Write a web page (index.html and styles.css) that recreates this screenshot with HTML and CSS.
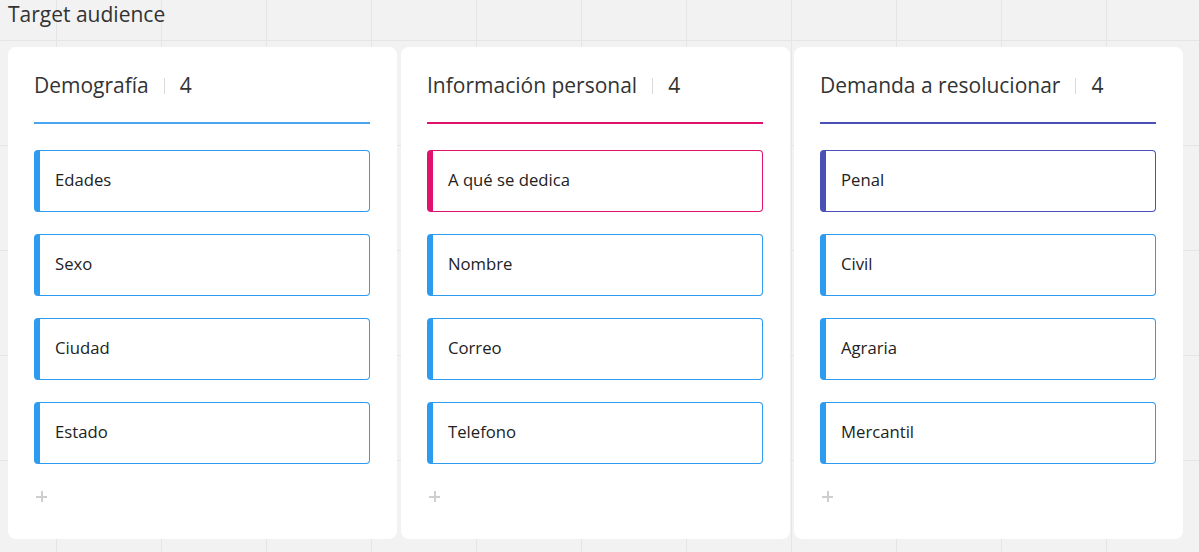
FILE: index.html
```html
<!DOCTYPE html>
<html lang="es">
<head>
<meta charset="utf-8">
<title>Target audience</title>
<link rel="stylesheet" href="styles.css">
</head>
<body>
<div class="page-title">Target audience</div>
<div class="boards">
  <section class="board blue">
    <header class="board-head"><span class="board-title">Demografía</span><span class="sep"></span><span class="count">4</span></header>
    <div class="rule"></div>
    <ul class="items">
      <li class="item">Edades</li>
      <li class="item">Sexo</li>
      <li class="item">Ciudad</li>
      <li class="item">Estado</li>
    </ul>
    <div class="add"></div>
  </section>
  <section class="board pink">
    <header class="board-head"><span class="board-title">Información personal</span><span class="sep"></span><span class="count">4</span></header>
    <div class="rule"></div>
    <ul class="items">
      <li class="item first">A qué se dedica</li>
      <li class="item">Nombre</li>
      <li class="item">Correo</li>
      <li class="item">Telefono</li>
    </ul>
    <div class="add"></div>
  </section>
  <section class="board purple">
    <header class="board-head"><span class="board-title">Demanda a resolucionar</span><span class="sep"></span><span class="count">4</span></header>
    <div class="rule"></div>
    <ul class="items">
      <li class="item first">Penal</li>
      <li class="item">Civil</li>
      <li class="item">Agraria</li>
      <li class="item">Mercantil</li>
    </ul>
    <div class="add"></div>
  </section>
</div>
</body>
</html>
```
FILE: styles.css
```css
* { box-sizing: border-box; }
html, body { height: 100%; }
body {
  margin: 0;
  font-family: "Open Sans", "Noto Sans", sans-serif;
  color: #333;
  background-color: #f2f2f2;
  background-image:
    linear-gradient(to right, #e5e5e5 1px, transparent 1px),
    linear-gradient(to bottom, #e5e5e5 1px, transparent 1px);
  background-size: 105px 105px;
  background-position: 56px 40px;
  overflow: hidden;
}
.page-title {
  height: 30px;
  line-height: 29px;
  padding-left: 8px;
  font-size: 21px;
  color: #333;
}
.boards {
  display: flex;
  gap: 4px;
  padding: 17px 8px 0;
}
.board {
  width: 389px;
  height: 492px;
  background: #fff;
  border-radius: 8px;
  padding: 26px 27px 0 26px;
  --c: #2d9bf0;
}
.board.blue { --c: #2d9bf0; }
.board.pink { --c: #e0126f; }
.board.purple { --c: #4a50b6; }
.board-head {
  display: flex;
  align-items: center;
  height: 24px;
  font-size: 21px;
  color: #333;
}
.sep {
  width: 1px;
  height: 16px;
  background: #d9d9d9;
  margin: 1px 15px 0 15px;
}
.rule {
  height: 2px;
  margin-top: 25px;
  background: var(--c);
}
.board.blue .rule { background: #4aa5f0; }
.items {
  list-style: none;
  margin: 26px 0 0;
  padding: 0;
  display: flex;
  flex-direction: column;
  gap: 22px;
}
.item {
  height: 62px;
  display: flex;
  align-items: center;
  border: 1px solid #2d9bf0;
  border-left: 6px solid #2d9bf0;
  border-radius: 4px;
  padding-left: 15px;
  padding-bottom: 4px;
  font-size: 16.7px;
  color: #222;
}
.item.first {
  border-color: var(--c);
}
.add {
  position: relative;
  width: 11px;
  height: 11px;
  margin: 27px 0 0 2px;
}
.add::before, .add::after {
  content: "";
  position: absolute;
  background: #cfcfcf;
}
.add::before { left: 0; top: 4.5px; width: 11px; height: 2px; }
.add::after { top: 0; left: 4.5px; width: 2px; height: 11px; }
```
